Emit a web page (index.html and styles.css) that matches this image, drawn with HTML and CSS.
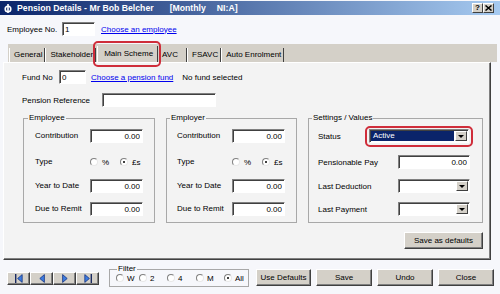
FILE: index.html
```html
<!DOCTYPE html>
<html lang="en">
<head>
    <meta charset="UTF-8">
    <title>Pension Details</title>
    <link rel="stylesheet" href="styles.css">
</head>
<body>
    <div class="window">
        <div class="titlebar">
            <svg class="app-icon" viewBox="0 0 8 9">
                <ellipse cx="4" cy="5" rx="2.8" ry="2.8" fill="none" stroke="#fff" stroke-width="1.6"/>
                <line x1="4" y1="0" x2="4" y2="9" stroke="#fff" stroke-width="1.6"/>
            </svg>
            <span class="title">Pension Details - Mr Bob Belcher</span>
            <span class="title title-period">[Monthly</span>
            <span class="title title-ni">NI:A]</span>
            <div class="caption-btns">
                <span class="cap-btn">?</span>
                <span class="cap-btn">
                    <svg viewBox="0 0 7 6" width="7" height="6">
                        <path d="M0.5 0.5 L6.5 5.5 M6.5 0.5 L0.5 5.5" stroke="#000" stroke-width="1.5"/>
                    </svg>
                </span>
            </div>
        </div>

        <div class="emp-row">
            <span class="emp-label">Employee No.</span>
            <input class="field emp-input" value="1">
            <a class="link emp-link" href="#">Choose an employee</a>
        </div>

        <div class="tabs">
            <span class="tab">General</span>
            <span class="tab">Stakeholder</span>
            <span class="tab tab-active">Main Scheme</span>
            <span class="tab">AVC</span>
            <span class="tab">FSAVC</span>
            <span class="tab">Auto Enrolment</span>
        </div>

        <div class="panel">
            <div class="fund-row">
                <span class="fund-label">Fund No</span>
                <input class="field fund-input" value="0">
                <a class="link fund-link" href="#">Choose a pension fund</a>
                <span class="fund-status">No fund selected</span>
            </div>
            <div class="ref-row">
                <span class="ref-label">Pension Reference</span>
                <input class="field ref-input" value="">
            </div>

            <div class="groups">
                <fieldset class="group group-employee">
                    <legend>Employee</legend>
                    <div class="group-rows">
                        <span class="lbl">Contribution</span>
                        <input class="field num" value="0.00">
                        <span class="lbl">Type</span>
                        <div class="opts">
                            <span class="opt opt-pct"><span class="radio"></span>%</span>
                            <span class="opt"><span class="radio checked"></span>£s</span>
                        </div>
                        <span class="lbl">Year to Date</span>
                        <input class="field num" value="0.00">
                        <span class="lbl">Due to Remit</span>
                        <input class="field num" value="0.00">
                    </div>
                </fieldset>

                <fieldset class="group group-employer">
                    <legend>Employer</legend>
                    <div class="group-rows">
                        <span class="lbl">Contribution</span>
                        <input class="field num" value="0.00">
                        <span class="lbl">Type</span>
                        <div class="opts">
                            <span class="opt opt-pct"><span class="radio"></span>%</span>
                            <span class="opt"><span class="radio checked"></span>£s</span>
                        </div>
                        <span class="lbl">Year to Date</span>
                        <input class="field num" value="0.00">
                        <span class="lbl">Due to Remit</span>
                        <input class="field num" value="0.00">
                    </div>
                </fieldset>

                <fieldset class="group group-settings">
                    <legend>Settings / Values</legend>
                    <div class="settings-rows">
                        <div class="status-row">
                            <span class="lbl status-label">Status</span>
                            <div class="combo combo-status">
                                <span class="combo-text">Active</span>
                                <span class="combo-btn"><span class="arrow"></span></span>
                            </div>
                        </div>
                        <div class="set-row">
                            <span class="lbl set-label">Pensionable Pay</span>
                            <input class="field num set-input" value="0.00">
                        </div>
                        <div class="set-row">
                            <span class="lbl set-label">Last Deduction</span>
                            <div class="combo set-input">
                                <span class="combo-text"></span>
                                <span class="combo-btn"><span class="arrow"></span></span>
                            </div>
                        </div>
                        <div class="set-row">
                            <span class="lbl set-label">Last Payment</span>
                            <div class="combo set-input">
                                <span class="combo-text"></span>
                                <span class="combo-btn"><span class="arrow"></span></span>
                            </div>
                        </div>
                    </div>
                </fieldset>
            </div>

            <div class="panel-foot">
                <button class="btn btn-defaults">Save as defaults</button>
            </div>
        </div>

        <div class="bottom">
            <div class="nav">
                <button class="btn nav-btn">
                    <svg viewBox="0 0 8 9" width="8" height="9">
                        <rect x="0" y="0" width="1.4" height="9" fill="#1a2a60"/>
                        <path d="M7.2 0.6 L2.6 4.5 L7.2 8.4 Z" fill="#3d7be0" stroke="#18357f" stroke-width="0.8"/>
                    </svg>
                </button>
                <button class="btn nav-btn">
                    <svg viewBox="0 0 6 9" width="6" height="9">
                        <path d="M5.4 0.6 L0.8 4.5 L5.4 8.4 Z" fill="#3d7be0" stroke="#18357f" stroke-width="0.8"/>
                    </svg>
                </button>
                <button class="btn nav-btn">
                    <svg viewBox="0 0 6 9" width="6" height="9">
                        <path d="M0.6 0.6 L5.2 4.5 L0.6 8.4 Z" fill="#3d7be0" stroke="#18357f" stroke-width="0.8"/>
                    </svg>
                </button>
                <button class="btn nav-btn">
                    <svg viewBox="0 0 8 9" width="8" height="9">
                        <path d="M0.8 0.6 L5.4 4.5 L0.8 8.4 Z" fill="#3d7be0" stroke="#18357f" stroke-width="0.8"/>
                        <rect x="6.6" y="0" width="1.4" height="9" fill="#1a2a60"/>
                    </svg>
                </button>
            </div>

            <fieldset class="filter">
                <legend>Filter</legend>
                <div class="filter-opts">
                    <span class="opt"><span class="radio"></span>W</span>
                    <span class="opt"><span class="radio"></span>2</span>
                    <span class="opt"><span class="radio"></span>4</span>
                    <span class="opt"><span class="radio"></span>M</span>
                    <span class="opt"><span class="radio checked"></span>All</span>
                </div>
            </fieldset>

            <button class="btn action-btn btn-use">Use Defaults</button>
            <button class="btn action-btn">Save</button>
            <button class="btn action-btn">Undo</button>
            <button class="btn action-btn">Close</button>
        </div>
    </div>
</body>
</html>
```

FILE: styles.css
```css
* {
    box-sizing: border-box;
}

body {
    margin: 0;
    background-color: #f6f7fb;
    font: 8px "Liberation Sans", Arial, sans-serif;
    color: #000;
}

.window {
    width: 500px;
    height: 294px;
    overflow: hidden;
    background-color: #f6f7fb;
}

/* title bar */
.titlebar {
    display: flex;
    align-items: center;
    height: 14px;
    margin-top: 1px;
    padding-left: 4px;
    background: linear-gradient(to right, #0a246a, #a6caf0);
    color: #fff;
}

.app-icon {
    width: 8px;
    height: 9px;
    margin-right: 5px;
}

.title {
    font-weight: bold;
    font-size: 8.7px;
    white-space: nowrap;
}

.title-period {
    margin-left: 16px;
}

.title-ni {
    margin-left: 11px;
}

.caption-btns {
    display: flex;
    margin-left: auto;
    margin-right: 6px;
}

.cap-btn {
    display: flex;
    align-items: center;
    justify-content: center;
    width: 11px;
    height: 10px;
    background-color: #d4d0c8;
    border: 1px solid;
    border-color: #fff #404040 #404040 #fff;
    color: #000;
    font-weight: bold;
    font-size: 8px;
    line-height: 8px;
}

/* generic controls */
.field {
    height: 14px;
    margin: 0;
    padding: 0 2px;
    border: 1px solid;
    border-color: #808080 #fff #fff #808080;
    box-shadow: inset 1px 1px 0 #404040;
    background-color: #fff;
    font: 8px "Liberation Sans", Arial, sans-serif;
    color: #000;
    outline: none;
}

.num {
    text-align: right;
}

.link {
    color: #0000ee;
    text-decoration: underline;
    white-space: nowrap;
}

.btn {
    margin: 0;
    padding: 0;
    background-color: #d4d0c8;
    border: 1px solid;
    border-color: #fff #404040 #404040 #fff;
    box-shadow: inset -1px -1px 0 #808080;
    font: 8px "Liberation Sans", Arial, sans-serif;
    color: #000;
}

.radio {
    position: relative;
    display: inline-block;
    width: 8px;
    height: 8px;
    border-radius: 50%;
    border: 1px solid;
    border-color: #808080 #e8e8e8 #e8e8e8 #808080;
    background-color: #fff;
}

.radio.checked::after {
    content: "";
    position: absolute;
    left: 2px;
    top: 2px;
    width: 2px;
    height: 2px;
    border-radius: 50%;
    background-color: #000;
}

.opt {
    display: inline-flex;
    align-items: center;
    gap: 4px;
    white-space: nowrap;
}

/* employee row */
.emp-row {
    display: flex;
    align-items: center;
    height: 14px;
    margin-top: 7px;
    padding-left: 7px;
}

.emp-label {
    width: 55px;
}

.emp-input {
    width: 33px;
}

.emp-link {
    margin-left: 6px;
}

/* tabs */
.tabs {
    display: flex;
    align-items: flex-end;
    height: 18px;
    margin: 8px 3px 0 8px;
    padding-left: 1px;
    background-color: #d4d0c8;
}

.tab {
    position: relative;
    min-width: 30px;
    height: 14px;
    line-height: 13px;
    padding: 0 2px 0 4px;
    border-left: 1px solid #fff;
    border-right: 1px solid #404040;
    white-space: nowrap;
}

.tab-active {
    height: 16px;
    line-height: 15px;
    padding: 0 4px 0 6px;
    margin: 0 -1px 0 1px;
    z-index: 1;
    background-color: #d4d0c8;
}

.tab-active::after {
    content: "";
    position: absolute;
    top: -5px;
    bottom: -5px;
    left: -5px;
    right: -4px;
    border: 2px solid #cf2d3a;
    border-radius: 5px;
}

/* panel */
.panel {
    height: 198px;
    margin: 0 9px 0 3px;
    padding: 7px 7px 0 18px;
    background-color: #f3f3f3;
    border: 1px solid;
    border-color: #fff #404040 #404040 #fff;
    box-shadow: inset -1px -1px 0 #808080;
}

.fund-row {
    display: flex;
    align-items: center;
    height: 14px;
}

.fund-label {
    width: 37px;
}

.fund-input {
    width: 27px;
}

.fund-link {
    margin-left: 5px;
}

.fund-status {
    margin-left: 9px;
}

.ref-row {
    display: flex;
    align-items: center;
    height: 14px;
    margin-top: 9px;
}

.ref-label {
    width: 80px;
}

.ref-input {
    width: 114px;
}

/* group boxes */
.groups {
    display: flex;
    gap: 11px;
    margin-top: 6px;
    margin-left: 1px;
}

.group {
    margin: 0;
    padding: 6px 0 6px 11px;
    border: 1px solid #a8a8a8;
    min-width: 0;
}

.group legend {
    padding: 0 1px;
    margin-left: -7px;
    line-height: 10px;
}

.group-employee {
    width: 132px;
}

.group-employer {
    width: 131px;
    padding-left: 10px;
}

.group-settings {
    width: 175px;
    padding-left: 9px;
}

.group-settings legend {
    margin-left: -6px;
}

.group-rows {
    display: grid;
    grid-template-columns: 55px 53px;
    grid-template-rows: 26px 24px 23px 14px;
    align-items: start;
}

.group-rows .lbl {
    line-height: 14px;
}

.opts {
    display: flex;
    align-items: center;
    height: 14px;
}

.opt-pct {
    width: 30px;
}

.settings-rows {
    display: grid;
    grid-template-rows: 26px 24px 23px 14px;
    align-items: start;
}

.status-row,
.set-row {
    display: flex;
    align-items: center;
    height: 14px;
}

.status-label {
    width: 51px;
}

.set-label {
    width: 80px;
}

.set-input {
    width: 72px;
}

.combo {
    display: flex;
    height: 14px;
    padding: 1px;
    border: 1px solid;
    border-color: #808080 #fff #fff #808080;
    box-shadow: inset 1px 1px 0 #404040;
    background-color: #fff;
}

.combo-status {
    position: relative;
    width: 100px;
}

.combo-status::after {
    content: "";
    position: absolute;
    top: -4px;
    bottom: -5px;
    left: -5px;
    right: -5px;
    border: 2px solid #cf2d3a;
    border-radius: 5px;
}

.combo-text {
    flex: 1;
    padding-left: 2px;
    line-height: 10px;
}

.combo-status .combo-text {
    margin-right: 1px;
    background-color: #0a246a;
    color: #fff;
}

.combo-btn {
    display: flex;
    align-items: center;
    justify-content: center;
    width: 12px;
    background-color: #d4d0c8;
    border: 1px solid;
    border-color: #fff #404040 #404040 #fff;
}

.arrow {
    width: 0;
    height: 0;
    border-left: 3px solid transparent;
    border-right: 3px solid transparent;
    border-top: 3px solid #000;
}

.panel-foot {
    display: flex;
    justify-content: flex-end;
    margin-top: 9px;
}

.btn-defaults {
    width: 79px;
    height: 17px;
}

/* bottom row */
.bottom {
    display: flex;
    align-items: flex-end;
    height: 31px;
    padding-left: 7px;
}

.nav {
    display: flex;
    margin-bottom: 6px;
}

.nav-btn {
    display: flex;
    align-items: center;
    justify-content: center;
    width: 23px;
    height: 13px;
}

.filter {
    width: 140px;
    margin: 0 0 4px 10px;
    padding: 0 0 3px 6px;
    border: 1px solid #a8a8a8;
    min-width: 0;
}

.filter legend {
    padding: 0 1px;
    margin-left: 1px;
    line-height: 8px;
}

.filter-opts {
    display: grid;
    grid-template-columns: 23px 28px 29px 28px auto;
    align-items: center;
    height: 10px;
}

.filter-opts .opt {
    gap: 3px;
}

.action-btn {
    width: 56px;
    height: 17px;
    margin: 0 0 5px 5px;
}

.btn-use {
    width: 55px;
    margin-left: 7px;
}
```
